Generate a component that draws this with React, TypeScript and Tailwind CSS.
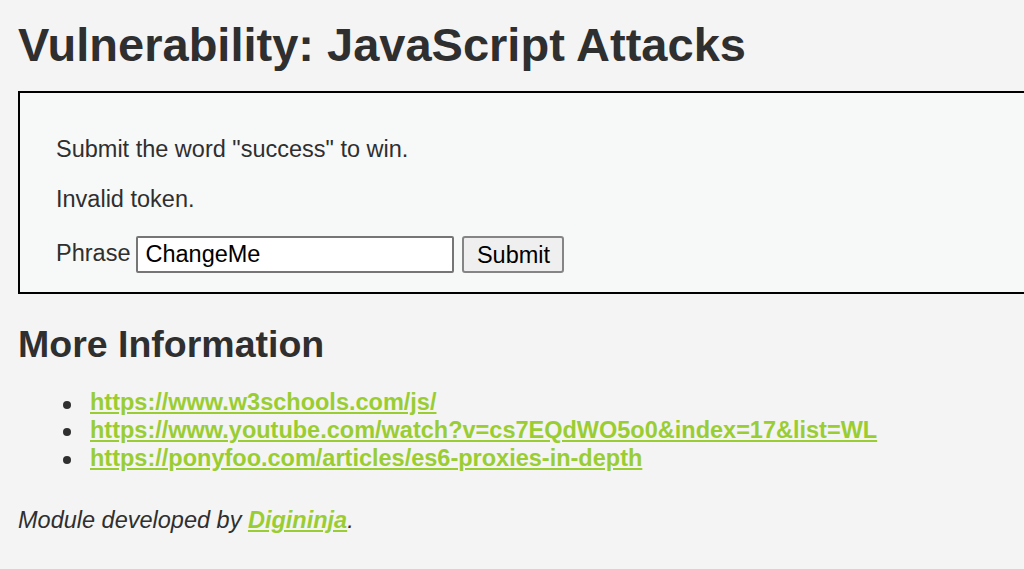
import React, { useState } from 'react';

const links = [
  'https://www.w3schools.com/js/',
  'https://www.youtube.com/watch?v=cs7EQdWO5o0&index=17&list=WL',
  'https://ponyfoo.com/articles/es6-proxies-in-depth',
];

const App: React.FC = () => {
  const [phrase, setPhrase] = useState('ChangeMe');

  return (
    <div className="min-h-[569px] bg-[#f4f4f4] text-[#2f2f2f] overflow-hidden" style={{ fontFamily: '"Liberation Sans", Arial, sans-serif' }}>
      <div className="pl-[18px]">
        <h1 className="pt-[20px] text-[47px] font-bold leading-[50px] text-[#2f2f2f]">Vulnerability: JavaScript Attacks</h1>

        {/* vulnerable code area */}
        <div className="mt-[21px] w-[1040px] border-2 border-black bg-[#f7f8f8] pl-[36px] pt-[41.5px] pb-[19px]">
          <p className="text-[23.5px] leading-[28px]">Submit the word "success" to win.</p>
          <p className="mt-[22px] text-[23.5px] leading-[28px]">Invalid token.</p>
          <form className="mt-[23.5px] flex items-start" onSubmit={(e) => e.preventDefault()}>
            <span className="mt-[3px] text-[23.5px] leading-[28px]">Phrase</span>
            <input
              type="text"
              value={phrase}
              onChange={(e) => setPhrase(e.target.value)}
              className="ml-[6px] h-[37px] w-[318px] border-2 border-[#767676] rounded-[2px] bg-white px-[7px] text-[23.5px] text-black outline-none"
            />
            <button type="submit" className="ml-[8px] h-[37px] w-[102px] border-2 border-[#858585] rounded-[3px] bg-[#efefef] text-[23.5px] text-black">
              Submit
            </button>
          </form>
        </div>

        <h2 className="mt-[28px] text-[37.5px] font-bold leading-[44px]">More Information</h2>
        <ul className="mt-[23px] pl-[45px] text-[23.5px] leading-[27.8px]">
          {links.map((l) => (
            <li key={l} className="flex items-start">
              <span className="mt-[11.5px] mr-[19px] h-[8px] w-[8px] shrink-0 rounded-full bg-[#2f2f2f]" />
              <a href={l} className="font-bold text-[#9acd32] underline">{l}</a>
            </li>
          ))}
        </ul>

        <p className="mt-[34px] text-[23.5px] italic leading-[28px]">
          Module developed by <a href="#" className="font-bold text-[#9acd32] underline">Digininja</a>.
        </p>
      </div>
    </div>
  );
};

export default App;
